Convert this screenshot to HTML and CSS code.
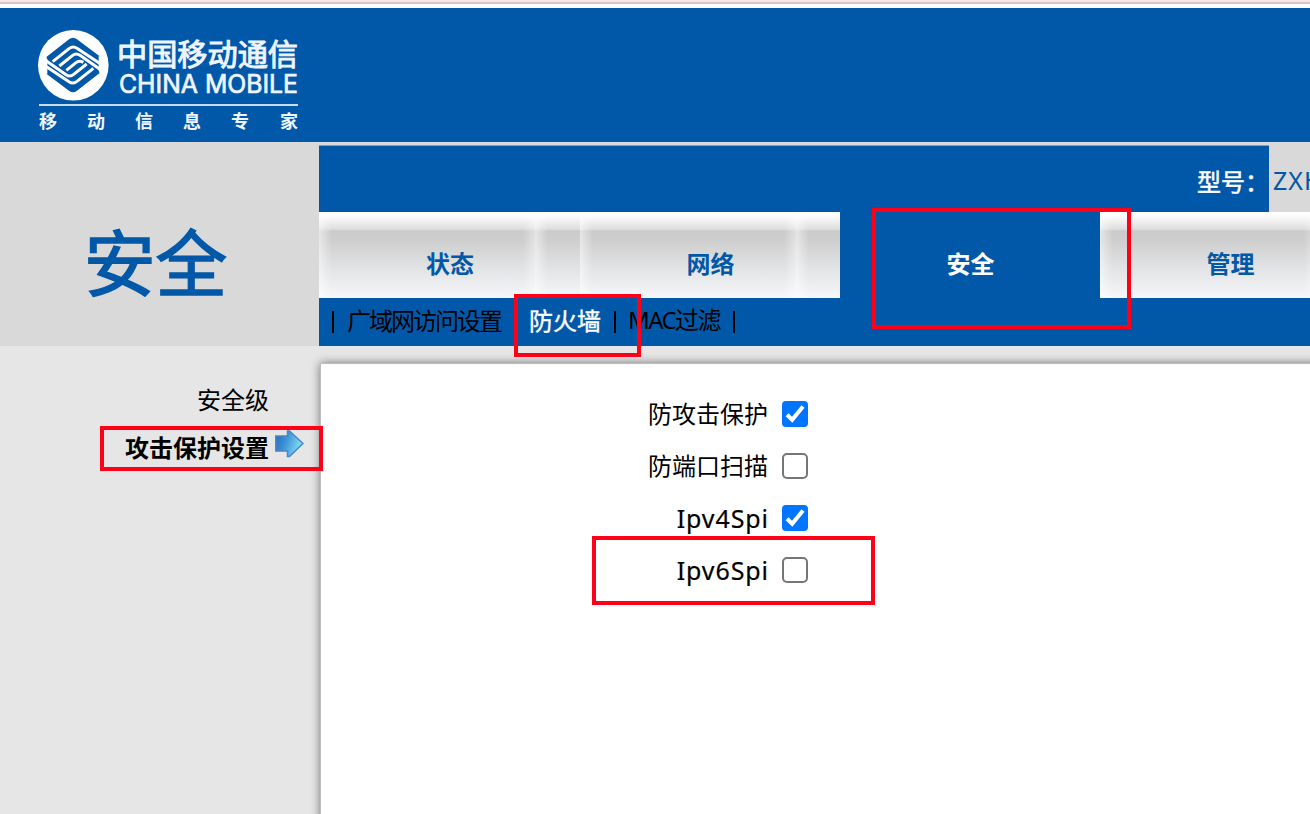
FILE: index.html
```html
<!DOCTYPE html>
<html lang="zh-CN">
<head>
<meta charset="utf-8">
<title>安全</title>
<link rel="stylesheet" href="styles.css">
</head>
<body>
<div class="strip"></div>
<header class="header">
  <svg class="logo" width="280" height="120" viewBox="30 20 280 120">
    <circle cx="73.3" cy="65.3" r="35.3" fill="#fff"/>
    <g transform="translate(36 28) scale(.33333)" fill="none" stroke="#fff" stroke-width="9" stroke-linejoin="round">
      <path d="M32 86L99 34Q111 25 123 34L190 84V136L123 188Q111 197 99 188L32 138Z" fill="#0258a8" stroke="none"/>
      <path d="M50 101L99 62Q111 53 123 61L195 109"/>
      <path d="M70 114L109 83Q120 74 132 82L195 126"/>
      <path d="M172 121L123 160Q111 169 99 161L27 113"/>
      <path d="M152 108L113 139Q102 148 90 140L27 96"/>
      <path d="M91 127L120 104Q130 96 142 103"/>
      <path d="M188 84L198 91V136L188 129ZM34 138L24 131V86L34 93Z" fill="#fff" stroke="none"/>
    </g>
    <g fill="#eef5ff">
      <text class="logo-cn" x="117" y="64.5" textLength="181" lengthAdjust="spacingAndGlyphs">中国移动通信</text>
      <text class="logo-en" x="119" y="92.5" textLength="179" lengthAdjust="spacingAndGlyphs">CHINA MOBILE</text>
      <rect x="39" y="104" width="259" height="2" fill="#cbdcf5"/>
      <text class="logo-tag" x="39 87 135 183 231 280" y="127.5">移动信息专家</text>
    </g>
  </svg>
</header>
<div class="top">
  <div class="title">安全</div>
  <div class="top-main">
    <div class="model"><div class="model-label">型号：</div><div class="model-value">ZXHN</div></div>
    <nav class="tabs">
      <a class="tab">状态</a><a class="tab">网络</a>
      <a class="tab active">安全<i class="mark mark-tab"></i></a><a class="tab">管理</a>
    </nav>
    <nav class="subnav">
      <span class="bar"></span><a class="sub wan">广域网访问设置</a><span class="bar"></span>
      <a class="sub current">防火墙<i class="mark mark-sub"></i></a><span class="bar"></span>
      <a class="sub mac">MAC过滤</a><span class="bar"></span>
    </nav>
  </div>
</div>
<div class="body">
  <aside class="side">
    <a class="side-item">安全级</a>
    <a class="side-item selected">攻击保护设置<svg class="arrow" width="29" height="28" viewBox="0 0 29 28">
      <defs><linearGradient id="ag" x1="0" y1="0" x2="1" y2=".3"><stop offset="0" stop-color="#2469bd"/><stop offset=".45" stop-color="#3e93d6"/><stop offset="1" stop-color="#80def5"/></linearGradient></defs>
      <path d="M.8 6H12.5V1h2L28 13.5 14.500 26.500h-2V21H.8Z" fill="url(#ag)" stroke="#4a85c8" stroke-width="1.5"/></svg><i class="mark mark-side"></i></a>
  </aside>
  <main class="main">
    <div class="panel">
      <label class="row"><span>防攻击保护</span><svg class="check" viewBox="0 0 26 26"><rect width="26" height="26" rx="4" fill="#0075ff"/><path d="M5 13.7L10.2 18.7 21 5.5" fill="none" stroke="#fff" stroke-width="4"/></svg></label>
      <label class="row"><span>防端口扫描</span><svg class="check" viewBox="0 0 26 26"><rect x="1" y="1" width="24" height="24" rx="4" fill="#fff" stroke="#767676" stroke-width="2"/></svg></label>
      <label class="row"><span class="latin">Ipv4Spi</span><svg class="check" viewBox="0 0 26 26"><rect width="26" height="26" rx="4" fill="#0075ff"/><path d="M5 13.7L10.2 18.7 21 5.5" fill="none" stroke="#fff" stroke-width="4"/></svg></label>
      <label class="row"><span class="latin">Ipv6Spi</span><svg class="check" viewBox="0 0 26 26"><rect x="1" y="1" width="24" height="24" rx="4" fill="#fff" stroke="#767676" stroke-width="2"/></svg><i class="mark mark-row"></i></label>
    </div>
  </main>
</div>
</body>
</html>
```
FILE: styles.css
```css
* { box-sizing: border-box; }
body {
  margin: 0;
  width: 1310px;
  height: 814px;
  overflow: hidden;
  display: flex;
  flex-direction: column;
  background: #e6e6e6;
  color: #000;
  font: 24px/36px "Noto Sans CJK SC", sans-serif;
}
.strip { height: 8px; background: linear-gradient(#fee4e4 2px, #d3c9cb 2px 4px, #fff 4px); }
.header { height: 134px; background: #0258a8; padding: 12px 0 0 30px; }
.logo { display: block; }
.logo-cn { font-size: 30px; font-weight: 400; stroke: #eef5ff; stroke-width: 1; }
.logo-en { font: 400 25px Inter, sans-serif; stroke: #eef5ff; stroke-width: .7; }
.logo-tag { font-size: 18px; font-weight: 700; }

.top { height: 204px; display: flex; background: #d9d9d9; }
.title {
  width: 319px;
  flex: none;
  padding: 65px 0 0 84px;
  font-size: 71.5px;
  line-height: 104px;
  -webkit-text-stroke: 1.6px #0258a8;
  color: #0258a8;
}
.top-main { width: 1041px; flex: none; }
.model { height: 70px; display: flex; color: #fff; }
.model-label {
  width: 950px;
  padding: 21px 0 0 878px;
  -webkit-text-stroke: .5px #fff;
  white-space: nowrap;
  background: linear-gradient(#d9d9d9 3px, #7f9fc0 3px 4px, #0258a8 4px);
}
.model-value { padding: 20px 0 0 4px; font: 25px/36px "Noto Sans", sans-serif; letter-spacing: 1px; color: #0258a8; }
.tabs { display: grid; grid-template-columns: 261px 260px 260px 260px; height: 86px; }
.tab {
  position: relative;
  padding: 33px 0 0 1px;
  text-align: center;
  font-weight: 700;
  color: #0258a8;
  background:
    linear-gradient(90deg, #fff8 0, #fff4 6px, #fff0 13px 204px, #fff6 216px) 0 0 / 216px 86px repeat-x,
    linear-gradient(#fff 0, #fafafa 5px, #dedede 17px, #cbcbcb 19px, #cecece 28px, #e2e4e6 58px, #f5f7fa 86px);
}
.tab.active { background: #0258a8; color: #fff; }
.subnav {
  display: flex;
  align-items: center;
  height: 48px;
  padding-left: 13px;
  background: #0258a8;
}
.bar { width: 2px; height: 22px; background: #000; }
.sub { white-space: nowrap; position: relative; top: -2px; }
.wan { width: 180px; padding-left: 13px; letter-spacing: -2px; }
.current { width: 98px; padding-left: 13px; -webkit-text-stroke: .4px #fff; color: #fff; }
.mac { width: 117px; padding-left: 12px; letter-spacing: -1.6px; font-family: "Noto Sans", "Noto Sans CJK SC", sans-serif; }

.body { flex: 1; display: flex; min-height: 0; }
.side { width: 302px; padding-top: 35px; display: flex; flex-direction: column; gap: 12px; }
.side-item { position: relative; display: flex; justify-content: flex-end; padding-right: 33px; }
.selected { font-weight: 700; }
.arrow { position: absolute; left: 275px; top: 1px; }
.main { flex: 1; padding: 18px 0 0 19px; overflow: hidden; }
.panel {
  height: 600px;
  width: 1100px;
  padding-top: 26px;
  display: flex;
  flex-direction: column;
  gap: 16px;
  background: #fff;
  box-shadow: 0 0 0 1px #bcbcbc, 0 0 9px 1px #777;
}
.row { position: relative; width: 487px; height: 36px; display: flex; justify-content: flex-end; gap: 14px; }
.row span { line-height: 48px; height: 36px; margin-top: -1px; }
.row .latin { font: 25px/52px "Noto Sans", sans-serif; letter-spacing: .9px; margin-right: -.9px; margin-top: -2px; -webkit-text-stroke: .2px #000; }
.check { width: 26px; height: 26px; margin-top: 11px; }

/* red highlight frames laid over the page */
.mark { position: absolute; z-index: 5; border: 4px solid #ff0018; pointer-events: none; }
.mark-tab { left: 32px; top: -4px; width: 259px; height: 121px; }
.mark-sub { left: -2px; top: -8px; width: 127px; height: 63px; }
.mark-side { left: 100px; top: -3px; width: 223px; height: 45px; }
.mark-row { left: 271px; top: -10px; width: 283px; height: 69px; }
```
